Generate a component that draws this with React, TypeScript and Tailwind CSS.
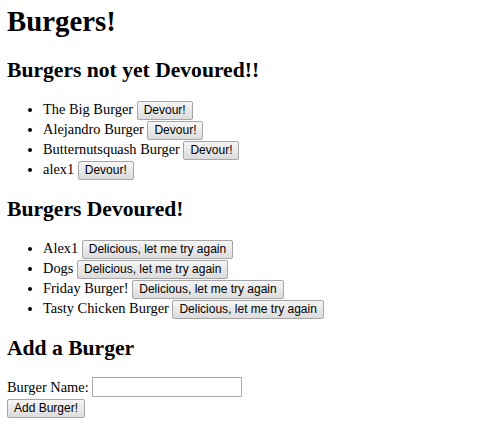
import React from "react";

const notDevoured = ["The Big Burger", "Alejandro Burger", "Butternutsquash Burger", "alex1"];
const devoured = ["Alex1", "Dogs", "Friday Burger!", "Tasty Chicken Burger"];

function Btn({ children }: { children: React.ReactNode }) {
  return (
    <button
      type="button"
      className="inline-block align-baseline bg-gradient-to-b from-[#f5f5f5] to-[#dcdcdc] border border-[#a6a6a6] rounded-[2px] px-[6px] py-[2px] text-[12px] leading-[13px] text-black [font-family:'Liberation_Sans',Arial,sans-serif]"
    >
      {children}
    </button>
  );
}

export default function App() {
  return (
    <div className="bg-white text-black min-h-[444px] px-[7px] pt-[5px] text-[14.4px] [font-family:'Liberation_Serif','Times_New_Roman',serif]">
      <h1 className="text-[28.8px] font-bold leading-[33px] m-0">Burgers!</h1>
      <h2 className="text-[21.6px] font-bold leading-[25px] mt-[20px] mb-[17px]">Burgers not yet Devoured!!</h2>
      <ul className="list-disc pl-[36px] m-0">
        {notDevoured.map((b) => (
          <li key={b} className="leading-[19px]">
            {b} <Btn>Devour!</Btn>
          </li>
        ))}
      </ul>
      <h2 className="text-[21.6px] font-bold leading-[25px] mt-[17px] mb-[17px]">Burgers Devoured!</h2>
      <ul className="list-disc pl-[36px] m-0">
        {devoured.map((b) => (
          <li key={b} className="leading-[19px]">
            {b} <Btn>Delicious, let me try again</Btn>
          </li>
        ))}
      </ul>
      <h2 className="text-[21.6px] font-bold leading-[25px] mt-[17px] mb-[16px]">Add a Burger</h2>
      <form onSubmit={(e) => e.preventDefault()}>
        <div className="leading-[19px]">
          <label>Burger Name: </label>
          <input type="text" className="w-[150px] h-[20px] border border-[#a9a9a9] align-baseline bg-white" />
        </div>
        <Btn>Add Burger!</Btn>
      </form>
    </div>
  );
}
